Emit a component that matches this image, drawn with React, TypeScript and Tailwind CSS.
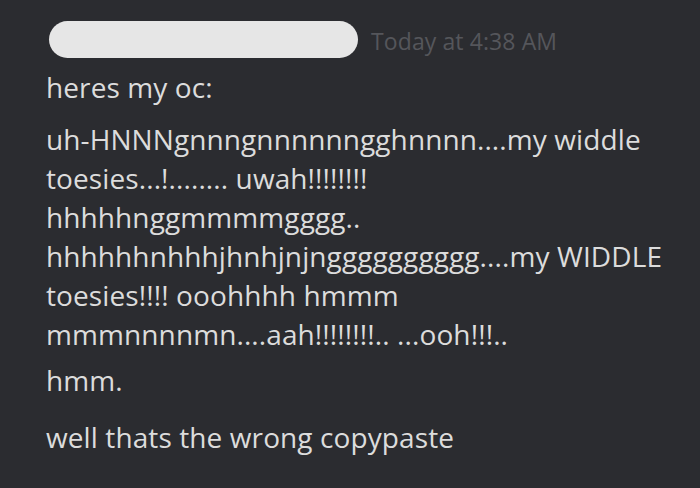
const lines = [
  'uh-HNNNgnnngnnnnnngghnnnn....my widdle',
  'toesies...!........ uwah!!!!!!!!',
  'hhhhhnggmmmmgggg..',
  'hhhhhhnhhhjhnhjnjngggggggggg....my WIDDLE',
  'toesies!!!! ooohhhh hmmm',
  'mmmnnnnmn....aah!!!!!!!!.. ...ooh!!!..',
];

export default function App() {
  return (
    <div
      className="w-[700px] h-[488px] overflow-hidden bg-[#2b2c30] pl-[46px] pt-[21px] text-[#dcdcdc]"
      style={{ fontFamily: '"Open Sans", "Noto Sans", sans-serif' }}
    >
      {/* header: redacted name + timestamp */}
      <div className="flex items-center gap-[13px]">
        <div className="ml-[3px] h-[37px] w-[309px] rounded-full bg-[#e6e6e6]" />
        <span className="mt-[4px] text-[23px] leading-none tracking-[0.1px] text-[#55565b]">Today at 4:38 AM</span>
      </div>

      <div className="mt-[10px] text-[28px] leading-[39px] tracking-[0.1px]">
        <p>heres my oc:</p>
        <div className="mt-[13px]">
          {lines.map((l) => (
            <p key={l}>{l}</p>
          ))}
        </div>
        <p className="mt-[7px]">hmm.</p>
        <p className="mt-[18px]">well thats the wrong copypaste</p>
      </div>
    </div>
  );
}
